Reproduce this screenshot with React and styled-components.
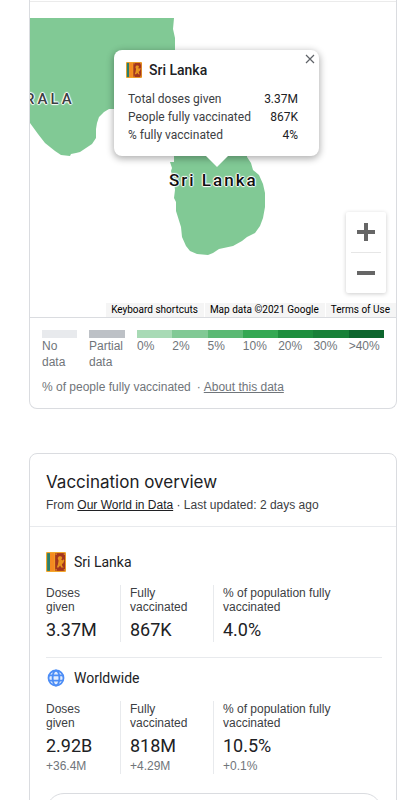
import React from 'react';
import styled, { createGlobalStyle } from 'styled-components';

const GlobalStyle = createGlobalStyle`
  * { box-sizing: border-box; }
  body {
    margin: 0;
    background: #fff;
    color: #202124;
    font-family: "Liberation Sans", Arial, sans-serif;
    font-size: 12px;
  }
  button { font: inherit; color: inherit; border: 0; background: none; padding: 0; cursor: pointer; }
  h2, h3, p, dl, dd, dt, ul { margin: 0; padding: 0; font-weight: 400; }
`;

const Page = styled.main`
  display: flex;
  flex-direction: column;
  gap: 44px;
  height: 100vh;
  overflow: hidden;
  padding: 0 7px 0 29px;
`;

const Card = styled.section`
  flex: none;
  border: 1px solid #dadce0;
  border-radius: ${(p) => (p.$continued ? '0 0 8px 8px' : '8px')};
  border-top-width: ${(p) => (p.$continued ? 0 : '1px')};
`;

const TopRule = styled.div`
  height: 2px;
  border-bottom: 1px solid #ebebeb;
`;

const MapArea = styled.div`
  position: relative;
  height: 316px;
  overflow: hidden;
  border-bottom: 1px solid #dadce0;
`;

const Land = styled.svg`
  display: block;
  width: 100%;
  height: 315px;
`;

const MapLabel = styled.span`
  position: absolute;
  left: ${(p) => p.$x}px;
  top: ${(p) => p.$y}px;
  font-family: Roboto, sans-serif;
  font-size: ${(p) => p.$size}px;
  font-weight: 500;
  line-height: 20px;
  letter-spacing: ${(p) => p.$tracking}px;
  white-space: nowrap;
  color: ${(p) => p.$color};
  text-shadow: 0 0 2px #fff, 1px 0 1px #fff, -1px 0 1px #fff, 0 1px 1px #fff, 0 -1px 1px #fff;
`;

const Popup = styled.div`
  position: absolute;
  left: 84px;
  top: 48px;
  width: 205px;
  height: 106px;
  padding: 11px 21px 0 14px;
  background: #fff;
  border-radius: 8px;
  box-shadow: 0 2px 7px 1px rgba(0, 0, 0, 0.3);
  font-family: Roboto, sans-serif;

  &::after {
    content: '';
    position: absolute;
    top: 100%;
    left: 92px;
    border: 11px solid transparent;
    border-top-color: #fff;
    border-bottom: 0;
  }
`;

const PopupTitle = styled.h3`
  display: flex;
  align-items: center;
  gap: 7px;
  margin-left: -2px;
  font-size: 14px;
  font-weight: 500;
  line-height: 18px;
`;

const PopupStats = styled.dl`
  margin-top: 11px;
  line-height: 18px;
`;

const PopupRow = styled.div`
  display: flex;
  justify-content: space-between;
  white-space: nowrap;
  color: #3c4043;

  dd { color: #202124; }
`;

const CloseButton = styled.button`
  position: absolute;
  top: 4px;
  right: 4px;
  width: 10px;
  height: 10px;
  display: flex;
`;

const ZoomControl = styled.div`
  position: absolute;
  right: 10px;
  bottom: 24px;
  width: 40px;
  padding: 0 5px;
  background: #fff;
  border-radius: 2px;
  box-shadow: 0 1px 4px rgba(0, 0, 0, 0.2);
`;

const ZoomButton = styled.button`
  display: flex;
  align-items: center;
  justify-content: center;
  width: 100%;
  height: 40px;

  & + & { border-top: 1px solid #e6e6e6; height: 41px; }
`;

const Attribution = styled.div`
  position: absolute;
  right: 0;
  bottom: 0;
  display: flex;
  gap: 1px;
  height: 14px;
  font-family: Roboto, sans-serif;
  font-size: 10px;
  line-height: 14px;
  white-space: nowrap;
  color: #000;

  > * {
    padding: 0 6px 0 5px;
    background: #f5f5f5;
    color: #000;
    text-decoration: none;
  }
`;

const Legend = styled.div`
  display: flex;
  gap: 12px;
  padding: 12px 12px 0;
  color: #70757a;
  line-height: 16px;
`;

const LegendItem = styled.div`
  width: ${(p) => p.$width || 'auto'};
  flex: ${(p) => (p.$width ? 'none' : '1')};

  &::before {
    content: '';
    display: block;
    height: 8px;
    background: ${(p) => p.$color};
  }
`;

const Scale = styled.div`
  display: flex;
  flex: 1;
`;

const LegendNote = styled.p`
  padding: 9px 12px 13px;
  line-height: 16px;
  color: #70757a;

  a { color: inherit; }
  span { margin: 0 3px 0 6px; }
`;

const OverviewHeader = styled.header`
  padding: 16px 16px 13px;
  border-bottom: 1px solid #e8eaed;
`;

const OverviewTitle = styled.h2`
  font-family: Inter, sans-serif;
  font-size: 17px;
  line-height: 24px;
`;

const Source = styled.p`
  margin-top: 3px;
  line-height: 16px;
  color: #3c4043;

  a { color: #202124; }
`;

const OverviewBody = styled.div`
  padding: 24px 14px 20px 16px;
`;

const Region = styled.section`
  & + & {
    margin-top: 15px;
    padding-top: 9px;
    border-top: 1px solid #e8eaed;
  }
`;

const RegionName = styled.h3`
  display: flex;
  align-items: center;
  gap: 8px;
  height: 22px;
  font-family: Roboto, sans-serif;
  font-size: 14px;
  color: #202124;
`;

const Stats = styled.dl`
  display: grid;
  grid-template-columns: 74px 93px 1fr;
  margin-top: 12px;
`;

const Stat = styled.div`
  padding: 1px 0 0;

  & + & {
    padding-left: 9px;
    border-left: 1px solid #e8eaed;
  }
`;

const StatLabel = styled.dt`
  max-width: ${(p) => (p.$wide ? '120px' : '60px')};
  line-height: 14px;
  color: #3c4043;
`;

const StatValue = styled.dd`
  margin-top: 4px;
  font-family: Roboto, sans-serif;
  font-size: 18px;
  line-height: 24px;
`;

const StatChange = styled.dd`
  line-height: 16px;
  color: #70757a;
`;

const MoreButton = styled.button`
  display: block;
  width: 100%;
  height: 36px;
  margin-top: 19px;
  border: 1px solid #dadce0;
  border-radius: 18px;
`;

const Icon = styled.svg`
  display: block;
  flex: none;
`;

function Flag({ size }) {
  return (
    <Icon width={size} height={size} viewBox="0 0 18 18" aria-hidden="true">
      <rect width="18" height="18" rx="1" fill="#f3a72c" />
      <rect x="1" y="1" width="2.6" height="16" fill="#2b7f6d" />
      <rect x="3.6" y="1" width="4" height="16" fill="#f58a20" />
      <rect x="8.2" y="1" width="9" height="16" fill="#a3361f" />
      <path d="M10.5 5.5l1.2-1.7h2l1 1.5-1 1.4 1.2 1 1-1.2.6 1-1 2.6-1.2.8.4 2 1.4 1h-2.4l-1-1.8-1.4 1.8h-1.6l1-2.6.6-3.4z" fill="#e8941f" />
      <path d="M8.6 1.4h1v1h-1zM16 1.4h1v1h-1zM8.6 15.6h1v1h-1zM16 15.6h1v1h-1z" fill="#f3a72c" />
    </Icon>
  );
}

function Globe() {
  return (
    <Icon width="20" height="20" viewBox="0 0 20 20" fill="none" stroke="#4c8df6" strokeWidth="1.8" aria-hidden="true">
      <circle cx="10" cy="10" r="7.5" fill="#e3edfd" />
      <ellipse cx="10" cy="10" rx="3.4" ry="7.5" />
      <path d="M3 7.3h14M3 12.7h14" />
    </Icon>
  );
}

const scale = [
  ['0%', '#a8dab5'],
  ['2%', '#81c995'],
  ['5%', '#5bb974'],
  ['10%', '#34a853'],
  ['20%', '#1e8e3e'],
  ['30%', '#188038'],
  ['>40%', '#0d652d'],
];

const popupStats = [
  ['Total doses given', '3.37M'],
  ['People fully vaccinated', '867K'],
  ['% fully vaccinated', '4%'],
];

const regions = [
  {
    name: 'Sri Lanka',
    icon: <Flag size={20} />,
    stats: [
      ['Doses given', '3.37M'],
      ['Fully vaccinated', '867K'],
      ['% of population fully vaccinated', '4.0%'],
    ],
  },
  {
    name: 'Worldwide',
    icon: <Globe />,
    stats: [
      ['Doses given', '2.92B', '+36.4M'],
      ['Fully vaccinated', '818M', '+4.29M'],
      ['% of population fully vaccinated', '10.5%', '+0.1%'],
    ],
  },
];

function VaccinationMap() {
  return (
    <MapArea>
      <Land viewBox="30 2 366 315" preserveAspectRatio="xMinYMin slice" aria-hidden="true">
        <g fill="#81c995">
          <path d="M30 18H174L173 29L175 38V50L160 90L125 108L114 109L109 109L104 112L99 117L97 123L96 129V138L92 144L80 152L76 153L71 154L70 156L61 155L55 151L45 143L38 134L30 123Z" />
          <path d="M174 150V162L170 162L172 168L171 171L174 182L175 190L174 198L176 202V211L181 227L182 237L186 246L190 251L197 254L208 255L213 253L219 249L233 246L242 241L247 237L255 233L260 226L263 218L265 207V193L263 184L259 175L253 170L251 163L247 157V150Z" />
        </g>
      </Land>
      <MapLabel $x={-5} $y={87} $size={15} $tracking={3} $color="#3c4043">RALA</MapLabel>
      <MapLabel $x={139} $y={168} $size={17} $tracking={2} $color="#111">Sri Lanka</MapLabel>
      <Popup role="dialog" aria-label="Sri Lanka">
        <PopupTitle><Flag size={16} />Sri Lanka</PopupTitle>
        <CloseButton aria-label="Close">
          <Icon width="10" height="10" viewBox="0 0 10 10" stroke="#5f6368" strokeWidth="1.2">
            <path d="M1 1l8 8M9 1L1 9" />
          </Icon>
        </CloseButton>
        <PopupStats>
          {popupStats.map(([label, value]) => (
            <PopupRow key={label}><dt>{label}</dt><dd>{value}</dd></PopupRow>
          ))}
        </PopupStats>
      </Popup>
      <ZoomControl>
        <ZoomButton aria-label="Zoom in">
          <Icon width="18" height="18" viewBox="0 0 18 18" fill="#666"><path d="M7 0h4v7h7v4h-7v7H7v-7H0V7h7z" /></Icon>
        </ZoomButton>
        <ZoomButton aria-label="Zoom out">
          <Icon width="18" height="18" viewBox="0 0 18 18" fill="#666"><path d="M0 7h18v4H0z" /></Icon>
        </ZoomButton>
      </ZoomControl>
      <Attribution>
        <button type="button">Keyboard shortcuts</button>
        <span>Map data ©2021 Google</span>
        <a href="#terms">Terms of Use</a>
      </Attribution>
    </MapArea>
  );
}

export default function App() {
  return (
    <>
      <GlobalStyle />
      <Page>
        <Card $continued>
          <TopRule />
          <VaccinationMap />
          <Legend>
            <LegendItem $width="35px" $color="#e8eaed">No data</LegendItem>
            <LegendItem $width="36px" $color="#bdc1c6">Partial data</LegendItem>
            <Scale>
              {scale.map(([label, color]) => (
                <LegendItem key={label} $color={color}>{label}</LegendItem>
              ))}
            </Scale>
          </Legend>
          <LegendNote>
            % of people fully vaccinated<span>·</span><a href="#about">About this data</a>
          </LegendNote>
        </Card>
        <Card>
          <OverviewHeader>
            <OverviewTitle>Vaccination overview</OverviewTitle>
            <Source>From <a href="#source">Our World in Data</a> · Last updated: 2 days ago</Source>
          </OverviewHeader>
          <OverviewBody>
            {regions.map((region) => (
              <Region key={region.name}>
                <RegionName>{region.icon}{region.name}</RegionName>
                <Stats>
                  {region.stats.map(([label, value, change], i) => (
                    <Stat key={label}>
                      <StatLabel $wide={i === 2}>{label}</StatLabel>
                      <StatValue>{value}</StatValue>
                      {change && <StatChange>{change}</StatChange>}
                    </Stat>
                  ))}
                </Stats>
              </Region>
            ))}
            <MoreButton type="button" aria-label="Show more" />
          </OverviewBody>
        </Card>
      </Page>
    </>
  );
}
